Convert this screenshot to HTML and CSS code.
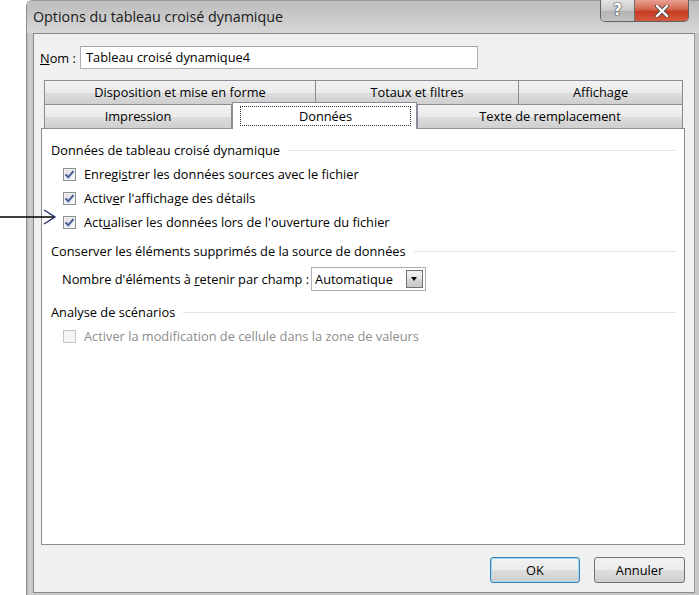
FILE: index.html
```html
<!DOCTYPE html>
<html lang="fr">
<head>
    <meta charset="UTF-8">
    <title>Options du tableau croisé dynamique</title>
    <link rel="stylesheet" href="styles.css">
</head>
<body>
    <div class="arrow">
        <svg width="58" height="16" viewBox="0 0 58 16">
            <line x1="0" y1="8" x2="54" y2="8" stroke="#000" stroke-width="1.3"/>
            <polyline points="44,1 55,8 44,15" fill="none" stroke="#1f2a6b" stroke-width="1.3"/>
        </svg>
    </div>

    <div class="window">
        <div class="titlebar">
            <span class="title">Options du tableau croisé dynamique</span>
            <div class="caption-buttons">
                <div class="btn-help">?</div>
                <div class="btn-close">
                    <svg width="16" height="12" viewBox="0 0 16 12">
                        <path d="M3 1 L13 11 M13 1 L3 11" stroke="#4a4a4a" stroke-width="4" stroke-linecap="round"/>
                        <path d="M3 1 L13 11 M13 1 L3 11" stroke="#fff" stroke-width="2.4" stroke-linecap="round"/>
                    </svg>
                </div>
            </div>
        </div>

        <div class="client">
            <div class="name-row">
                <label class="name-label"><u>N</u>om :</label>
                <div class="textbox">Tableau croisé dynamique4</div>
            </div>

            <div class="tabs">
                <div class="tab-row back">
                    <div class="tab t-dispo">Disposition et mise en forme</div>
                    <div class="tab t-totaux">Totaux et filtres</div>
                    <div class="tab t-affich">Affichage</div>
                </div>
                <div class="tab-row front">
                    <div class="tab t-impr">Impression</div>
                    <div class="tab t-donnees selected"><span class="focus">Données</span></div>
                    <div class="tab t-texte">Texte de remplacement</div>
                </div>
            </div>

            <div class="panel">
                <div class="group-title"><span>Données de tableau croisé dynamique</span></div>
                <div class="check-row first">
                    <span class="checkbox checked"></span>
                    <span>Enregi<u>s</u>trer les données sources avec le fichier</span>
                </div>
                <div class="check-row">
                    <span class="checkbox checked"></span>
                    <span>Activ<u>e</u>r l'affichage des détails</span>
                </div>
                <div class="check-row">
                    <span class="checkbox checked"></span>
                    <span>Act<u>u</u>aliser les données lors de l'ouverture du fichier</span>
                </div>

                <div class="group-title g-conserver"><span>Conserver les éléments supprimés de la source de données</span></div>
                <div class="select-row">
                    <span>Nombre d'éléments à <u>r</u>etenir par champ :</span>
                    <div class="combo">
                        <span class="combo-value">Automatique</span>
                        <span class="combo-btn"></span>
                    </div>
                </div>

                <div class="group-title g-analyse"><span>Analyse de scénarios</span></div>
                <div class="check-row first disabled">
                    <span class="checkbox"></span>
                    <span>Activer la modification de cellule dans la zone de valeurs</span>
                </div>
            </div>

            <div class="footer">
                <div class="button default">OK</div>
                <div class="button">Annuler</div>
            </div>
        </div>
    </div>
</body>
</html>
```

FILE: styles.css
```css
html, body {
    margin: 0;
    padding: 0;
}

body {
    width: 699px;
    height: 595px;
    overflow: hidden;
    background: #fff;
    font-family: "Open Sans", "Noto Sans", sans-serif;
    font-size: 12.8px;
    color: #000;
    position: relative;
}

.arrow {
    position: absolute;
    left: 0;
    top: 209px;
}

.arrow svg {
    display: block;
}

.window {
    margin-left: 26px;
    width: 676px;
    height: 595px;
    box-sizing: border-box;
    background: linear-gradient(to right, #b9b9b9, #cfcfcf 3px, #c7c7c7 6px);
    border-left: 1px solid #8a8a8a;
    border-top: 1px solid #9a9a9a;
    border-top-left-radius: 6px;
    display: flex;
    flex-direction: column;
    padding: 0 7px 2px 6px;
}

.titlebar {
    height: 32px;
    display: flex;
    align-items: flex-start;
    background: linear-gradient(to bottom, #bdbdbd, #d6d6d6);
    margin: 0 -7px 0 -6px;
    padding: 0 7px 0 6px;
}

.title {
    font-size: 14.3px;
    color: #1a1a1a;
    margin-top: 6px;
}

.caption-buttons {
    margin-left: auto;
    margin-right: 6px;
    display: flex;
    height: 21px;
    margin-top: -1px;
    border: 1px solid #5f6368;
    border-top: none;
    border-radius: 0 0 5px 5px;
    overflow: hidden;
}

.btn-help {
    width: 33px;
    background: linear-gradient(to bottom, #e4e4e4, #c9c9c9 50%, #b3b3b3 51%, #c2c2c2);
    border-right: 1px solid #6f6f6f;
    color: #fff;
    font-weight: bold;
    font-size: 15px;
    line-height: 20px;
    text-align: center;
    text-shadow: 0 0 2px #333, 0 0 1px #333;
    font-family: "DejaVu Sans", sans-serif;
}

.btn-close {
    width: 53px;
    background: linear-gradient(to bottom, #e8a293, #d5634c 45%, #c63b22 55%, #d45a3e);
    display: flex;
    align-items: center;
    justify-content: center;
}

.client {
    flex: 1;
    background: #f0f0f0;
    border: 1px solid #8a8a8a;
    border-right-color: #9a9a9a;
    display: flex;
    flex-direction: column;
    padding: 12px 9px 0 7px;
}

.name-row {
    display: flex;
    align-items: center;
    margin-left: -1px;
}

.name-label {
    width: 40px;
}

.textbox {
    width: 391px;
    height: 21px;
    border: 1px solid #abadb3;
    border-top-color: #a3a6ad;
    background: #fff;
    line-height: 21px;
    padding-left: 5px;
}

.tabs {
    margin-top: 11px;
    padding: 0 2px 0 3px;
}

.tab-row {
    display: flex;
    height: 24px;
}

.tab {
    box-sizing: border-box;
    height: 24px;
    line-height: 23px;
    text-align: center;
    border: 1px solid #898c95;
    border-bottom: none;
    background: linear-gradient(to bottom, #f2f2f2, #ebebeb 50%, #dddddd 51%, #cfcfcf);
}

.tab + .tab {
    border-left: none;
}

.t-dispo { width: 272px; }
.t-totaux { width: 203px; }
.t-affich { flex: 1; }
.t-impr { width: 188px; }
.t-donnees { width: 185px; }
.t-texte { flex: 1; }

.tab.selected {
    background: #fff;
    border-left: 1px solid #898c95;
    height: 27px;
    margin-top: -2px;
    margin-bottom: -1px;
    position: relative;
    z-index: 1;
    padding: 3px 5px 0 7px;
    line-height: 18px;
}

.tab.selected + .tab {
    border-left: 1px solid #898c95;
}

.focus {
    display: block;
    border: 1px dotted #333;
    height: 18px;
    line-height: 18px;
}

.panel {
    height: 417px;
    background: #fff;
    border: 1px solid #898c95;
    padding: 12px 8px 0 9px;
    box-sizing: border-box;
}

.group-title {
    display: flex;
    align-items: center;
    height: 18px;
}

.group-title::after {
    content: "";
    flex: 1;
    height: 1px;
    background: #dde3ea;
    margin-left: 8px;
}

.g-conserver {
    margin-top: 8px;
}

.g-analyse {
    margin-top: 10px;
}

.check-row {
    display: flex;
    align-items: center;
    height: 24px;
    margin-left: 12px;
}

.check-row.first {
    margin-top: 3px;
}

.checkbox {
    width: 11px;
    height: 11px;
    border: 1px solid #8e8f8f;
    background: linear-gradient(135deg, #dcdcdc, #fbfbfb);
    margin-right: 8px;
    position: relative;
    box-shadow: inset 0 0 0 1px #f4f4f4;
}

.checkbox.checked::after {
    content: "";
    position: absolute;
    left: 3px;
    top: 0;
    width: 3px;
    height: 7px;
    border: solid #4c61a0;
    border-width: 0 2px 2px 0;
    transform: rotate(40deg);
}

.select-row {
    display: flex;
    align-items: center;
    height: 28px;
    margin-top: 5px;
    margin-left: 11px;
}

.combo {
    margin-left: 2px;
    width: 113px;
    height: 22px;
    border: 1px solid #abadb3;
    display: flex;
    align-items: center;
    background: #fff;
}

.combo-value {
    flex: 1;
    padding-left: 3px;
}

.combo-btn {
    width: 17px;
    height: 18px;
    margin-right: 2px;
    border: 1px solid #707070;
    box-sizing: border-box;
    background: linear-gradient(to bottom, #f2f2f2, #e5e5e5 50%, #d6d6d6 51%, #c9c9c9);
    position: relative;
}

.combo-btn::after {
    content: "";
    position: absolute;
    left: 4px;
    top: 6px;
    border-left: 3.5px solid transparent;
    border-right: 3.5px solid transparent;
    border-top: 4px solid #000;
}

.check-row.disabled {
    color: #8d8d8d;
}

.check-row.disabled .checkbox {
    border-color: #c6c6c6;
    background: #f4f4f4;
}

.footer {
    display: flex;
    justify-content: flex-end;
    gap: 14px;
    margin-top: 12px;
}

.button {
    box-sizing: border-box;
    width: 91px;
    height: 26px;
    line-height: 24px;
    text-align: center;
    border: 1px solid #707070;
    border-radius: 3px;
    background: linear-gradient(to bottom, #f2f2f2, #ebebeb 50%, #dddddd 51%, #cfcfcf);
}

.button.default {
    width: 90px;
    border-color: #3c7fb1;
    box-shadow: inset 0 0 0 1px #9fdbf5;
}
```
